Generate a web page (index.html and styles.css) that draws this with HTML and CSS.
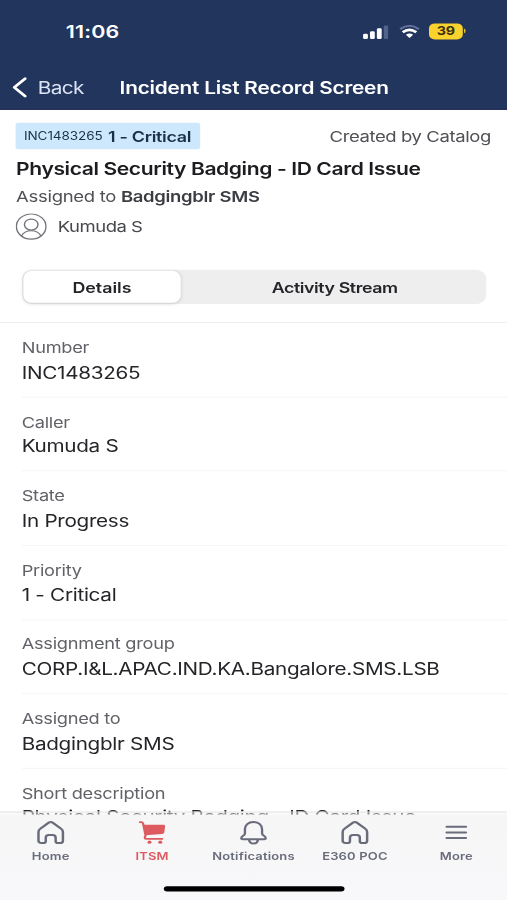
FILE: index.html
```html
<!DOCTYPE html>
<html lang="en">
<head>
  <meta charset="UTF-8">
  <meta name="viewport" content="width=device-width, initial-scale=1.0">
  <title>Incident List Record Screen</title>
  <link rel="stylesheet" href="styles.css">
</head>
<body>
  <div class="screen">

    <header>
      <div class="status-bar">
        <span class="time">11:06</span>
        <div class="status-icons">
          <svg class="signal" width="20" height="14" viewBox="0 0 20 14">
            <rect x="0.3" y="8.6" width="3.7" height="4.9" rx="1.2" fill="#fff"/>
            <rect x="5.6" y="6.4" width="3.7" height="7.1" rx="1.2" fill="#fff"/>
            <rect x="10.9" y="3.5" width="3.7" height="10" rx="1.2" fill="#fff"/>
            <rect x="16.2" y="1" width="3.4" height="12.5" rx="1.2" fill="#52638b"/>
          </svg>
          <svg class="wifi" width="16" height="13" viewBox="0 0 16 13">
            <path d="M.8 4.3Q8-2 15.2 4.3" fill="none" stroke="#60709a" stroke-width="1.9"/>
            <path d="M2.8 7.2Q8 2.8 13.2 7.2" fill="none" stroke="#fff" stroke-width="2.3"/>
            <path d="M5.2 9.6Q8 7.4 10.8 9.6L8 12.6z" fill="#fff"/>
          </svg>
          <span class="battery">39</span>
        </div>
      </div>
      <nav class="nav-bar">
        <a class="back" href="#">
          <svg width="12" height="20" viewBox="0 0 12 20">
            <path d="M10.3 1.8L2 10l8.3 8.2" fill="none" stroke="#fff" stroke-width="2.4" stroke-linecap="round" stroke-linejoin="round"/>
          </svg>
          <span>Back</span>
        </a>
        <h1>Incident List Record Screen</h1>
      </nav>
    </header>

    <section class="summary">
      <div class="summary-top">
        <div class="badge"><span class="badge-number">INC1483265</span><b>1 - Critical</b></div>
        <span class="created">Created by Catalog</span>
      </div>
      <h2>Physical Security Badging - ID Card Issue</h2>
      <p class="assigned">Assigned to <b>Badgingblr SMS</b></p>
      <div class="person">
        <svg width="24" height="25" viewBox="0 0 24 25">
          <g fill="none" stroke="#707377" stroke-width="1.1">
            <ellipse cx="12" cy="12.5" rx="11.4" ry="11.8"/>
            <ellipse cx="12" cy="10.6" rx="5.2" ry="5.2"/>
            <path d="M4.5 21.4c1.3-3.3 4-5 7.5-5s6.2 1.7 7.5 5"/>
          </g>
        </svg>
        <span>Kumuda S</span>
      </div>
    </section>

    <div class="tabs">
      <div class="tab active">Details</div>
      <div class="tab">Activity Stream</div>
    </div>

    <main class="fields">
      <div class="field">
        <label>Number</label>
        <p>INC1483265</p>
      </div>
      <div class="field">
        <label>Caller</label>
        <p>Kumuda S</p>
      </div>
      <div class="field">
        <label>State</label>
        <p>In Progress</p>
      </div>
      <div class="field">
        <label>Priority</label>
        <p>1 - Critical</p>
      </div>
      <div class="field">
        <label>Assignment group</label>
        <p>CORP.I&amp;L.APAC.IND.KA.Bangalore.SMS.LSB</p>
      </div>
      <div class="field">
        <label>Assigned to</label>
        <p>Badgingblr SMS</p>
      </div>
      <div class="field">
        <label>Short description</label>
        <p>Physical Security Badging - ID Card Issue</p>
      </div>
    </main>

    <footer>
      <div class="menu">
        <a href="#">
          <svg width="22" height="24" viewBox="0 0 22 24">
            <path d="M1.6 11.2Q1.6 9.3 3 8.2L9.5 2.4Q11 1.2 12.5 2.4L19 8.2Q20.4 9.3 20.4 11.2V19.3Q20.4 21.5 18.2 21.5H16.5Q14.8 21.5 14.8 19.8V16.5Q14.8 14 12.5 14H9.5Q7.2 14 7.2 16.5V19.8Q7.2 21.5 5.5 21.5H3.8Q1.6 21.5 1.6 19.3z" fill="none" stroke="currentColor" stroke-width="1.9"/>
          </svg>
          <span>Home</span>
        </a>
        <a class="current" href="#">
          <svg width="22" height="24" viewBox="0 0 22 24">
            <path d="M4 4.3H19.8Q21.2 4.3 21 5.7L20.4 11.5Q20.2 12.8 19 13L5.8 14.2z" fill="currentColor"/>
            <path d="M1.6 2H2.8Q3.7 2 4 3L6 14.5Q4.4 17.6 6.8 17.6H18.8" fill="none" stroke="currentColor" stroke-width="1.7" stroke-linecap="round"/>
            <circle cx="9" cy="20.7" r="1.5" fill="currentColor"/>
            <circle cx="17.3" cy="20.7" r="1.5" fill="currentColor"/>
          </svg>
          <span>ITSM</span>
        </a>
        <a href="#">
          <svg width="22" height="24" viewBox="0 0 22 24">
            <path d="M11 1.8C6.9 1.8 4.4 4.8 4.4 8.6V12.5Q4.4 13.7 3 14.7Q1.6 15.7 1.6 17Q1.6 18 2.8 18H19.2Q20.4 18 20.4 17Q20.4 15.7 19 14.7Q17.6 13.7 17.6 12.5V8.6C17.6 4.8 15.1 1.8 11 1.8zM7.5 18.3Q8 22 11 22T14.5 18.3" fill="none" stroke="currentColor" stroke-width="1.8"/>
          </svg>
          <span>Notifications</span>
        </a>
        <a href="#">
          <svg width="22" height="24" viewBox="0 0 22 24">
            <path d="M1.6 11.2Q1.6 9.3 3 8.2L9.5 2.4Q11 1.2 12.5 2.4L19 8.2Q20.4 9.3 20.4 11.2V19.3Q20.4 21.5 18.2 21.5H16.5Q14.8 21.5 14.8 19.8V16.5Q14.8 14 12.5 14H9.5Q7.2 14 7.2 16.5V19.8Q7.2 21.5 5.5 21.5H3.8Q1.6 21.5 1.6 19.3z" fill="none" stroke="currentColor" stroke-width="1.9"/>
          </svg>
          <span>E360 POC</span>
        </a>
        <a href="#">
          <svg width="22" height="24" viewBox="0 0 22 24">
            <path d="M3.6 6.3h14.8M3.6 11.6h14.8M3.6 16.9h14.8" fill="none" stroke="currentColor" stroke-width="1.9" stroke-linecap="round"/>
          </svg>
          <span>More</span>
        </a>
      </div>
      <div class="home-indicator"></div>
    </footer>

  </div>
</body>
</html>
```
FILE: styles.css
```css
* {
  margin: 0;
  padding: 0;
  box-sizing: border-box;
}

body {
  width: 507px;
  height: 900px;
  overflow: hidden;
  background: #fff;
  font-family: Inter, 'Liberation Sans', sans-serif;
  color: #242528;
}

a {
  color: inherit;
  text-decoration: none;
}

svg {
  display: block;
}

/* 390x844 phone screen, stretched to fill the window */
.screen {
  position: relative;
  width: 390px;
  height: 844px;
  overflow: hidden;
  transform: scale(1.3, 1.0664);
  transform-origin: 0 0;
}

header {
  height: 103.4px;
  background: #22355d;
  border-bottom: 1px solid #232b55;
  color: #fff;
}

.status-bar {
  display: flex;
  justify-content: space-between;
  align-items: center;
  height: 59px;
  padding: 0 34px 0 50.5px;
}

.time {
  font-size: 16.5px;
  font-weight: 600;
  letter-spacing: 0.15px;
}

.status-icons {
  display: flex;
  align-items: center;
  gap: 7.4px;
}

.battery {
  position: relative;
  width: 26px;
  height: 14.5px;
  border-radius: 4.5px;
  background: #f9d22e;
  color: #39330f;
  font-size: 11px;
  font-weight: 700;
  line-height: 14.5px;
  text-align: center;
}

.battery::after {
  content: '';
  position: absolute;
  right: -2px;
  top: 5px;
  width: 1.3px;
  height: 4px;
  border-radius: 0 2px 2px 0;
  background: #f9d22e;
}

.nav-bar {
  display: flex;
  align-items: center;
  height: 46px;
  padding-left: 9px;
}

.back {
  display: flex;
  align-items: center;
  gap: 8px;
  width: 83px;
  font-size: 16px;
  letter-spacing: -0.45px;
  color: #dbe3f5;
}

h1 {
  font-size: 16px;
  font-weight: 600;
  letter-spacing: -0.17px;
  white-space: nowrap;
}

.summary {
  height: 149.6px;
  padding: 12px 12.4px 0;
}

.summary-top {
  display: flex;
  justify-content: space-between;
  align-items: center;
  height: 24.5px;
}

.badge {
  display: flex;
  align-items: center;
  gap: 4px;
  width: 141.5px;
  height: 24.5px;
  padding-left: 6px;
  border-radius: 2px;
  background: #cde8fd;
  color: #1c3045;
  font-size: 13.8px;
  letter-spacing: -0.22px;
  white-space: nowrap;
}

.badge-number {
  font-size: 10.4px;
  letter-spacing: -0.05px;
}

b {
  font-weight: 600;
}

.created {
  font-size: 14.2px;
  letter-spacing: -0.29px;
  color: #505155;
}

h2 {
  margin-top: 7px;
  font-size: 16.2px;
  font-weight: 600;
  letter-spacing: -0.3px;
  line-height: 22px;
  white-space: nowrap;
  color: #1c1c20;
}

.assigned {
  margin-top: 5.5px;
  font-size: 14.2px;
  letter-spacing: -0.22px;
  line-height: 20px;
  color: #505155;
}

.assigned b {
  color: #3c3d42;
}

.person {
  display: flex;
  align-items: center;
  gap: 8px;
  margin-top: 5.2px;
  font-size: 14.2px;
  letter-spacing: -0.35px;
  color: #47484c;
}

.tabs {
  display: flex;
  width: 357.5px;
  height: 32.3px;
  margin-left: 16.7px;
  padding: 1.5px;
  border-radius: 8px;
  background: #eeeeef;
  font-size: 13.7px;
  font-weight: 600;
  letter-spacing: -0.33px;
}

.tab {
  display: flex;
  flex: 1;
  justify-content: center;
  align-items: center;
  padding: 0.8px 0 0 3.5px;
}

.tab.active {
  flex: none;
  width: 120.5px;
  padding-left: 0;
  border-radius: 7px;
  background: #fff;
  box-shadow: 0 1px 3px rgba(0, 0, 0, 0.15);
  letter-spacing: 0;
}

.fields {
  margin-top: 17px;
  border-top: 1px solid #f0f0f1;
}

.field {
  height: 69.6px;
  margin-left: 16.7px;
  padding-top: 12.8px;
  border-bottom: 1px solid #f5f5f6;
}

.field label {
  display: block;
  font-size: 14px;
  letter-spacing: -0.2px;
  line-height: 20px;
  color: #626368;
}

.field p {
  margin-top: 1.8px;
  font-size: 15.9px;
  letter-spacing: -0.22px;
  line-height: 24px;
  white-space: nowrap;
}

footer {
  position: absolute;
  left: 0;
  bottom: 0;
  width: 390px;
  height: 83.5px;
  border-top: 1px solid #e2e2e4;
  background: linear-gradient(rgba(246, 246, 247, 0.3), rgba(246, 246, 247, 0.6) 1.5px, #f6f6f7 2.5px, #f8f7f9);
}

.menu {
  display: flex;
  height: 69.4px;
  color: #696c7b;
  font-size: 10px;
  font-weight: 600;
  letter-spacing: 0.12px;
}

.menu a {
  display: flex;
  flex: 1;
  flex-direction: column;
  align-items: center;
  gap: 2.6px;
  padding-top: 7.6px;
}

.menu .current {
  color: #dc5a60;
}

.home-indicator {
  width: 139px;
  height: 5.4px;
  margin: 0 auto;
  border-radius: 3px;
  background: #000;
}
```
